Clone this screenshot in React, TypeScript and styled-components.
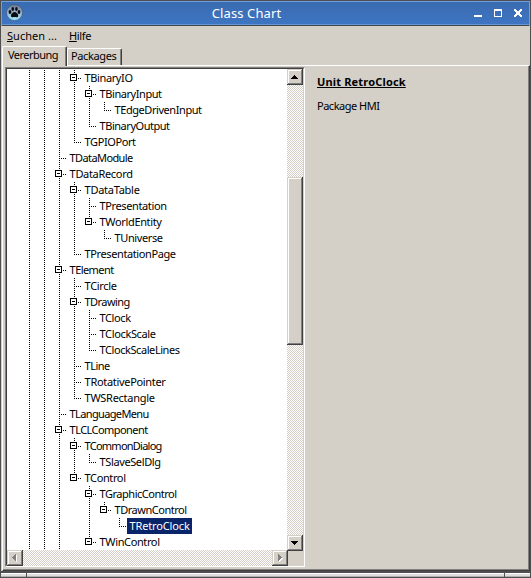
import React from 'react';
import styled, { createGlobalStyle, css } from 'styled-components';

const face = '#d4d0c8';
const uiFont = '"Noto Sans", "DejaVu Sans", sans-serif';

const GlobalStyle = createGlobalStyle`
  html, body { margin: 0; overflow: hidden; }
  * { box-sizing: border-box; }
`;

const Window = styled.div`
  width: 531px;
  height: 578px;
  display: flex;
  flex-direction: column;
  background: ${face};
  border: 1px solid #4f4f4f;
  font: 11px/16px ${uiFont};
  color: #000;
  cursor: default;
`;

const TitleBar = styled.header`
  height: 25px;
  flex: none;
  display: grid;
  grid-template-columns: 22px 1fr 60px;
  align-items: center;
  border: 1px solid #6fa0dc;
  border-bottom: 0;
  box-shadow: inset 0 -1px #3f4650, inset 0 -2px #6497d2;
  background: linear-gradient(#3a6bb0, #3e76c4);
`;

const AppIcon = styled.svg`
  display: block;
  margin: 0 0 3px 4px;
`;

const Title = styled.h1`
  margin: 0;
  font: 13px/20px "Noto Sans", sans-serif;
  color: #fff;
  text-align: center;
  padding-bottom: 3px;
  letter-spacing: 0.1px;
`;

const Controls = styled.svg`
  display: block;
`;

const MenuBar = styled.nav`
  height: 20px;
  flex: none;
  display: flex;
  gap: 13px;
  padding: 2px 0 0 6px;
`;

const MenuItem = styled.span<{ $w: number; $ls: number }>`
  display: block;
  width: ${p => p.$w}px;
  white-space: nowrap;
  letter-spacing: ${p => p.$ls}px;
  &::first-letter { text-decoration: underline; }
`;

const Tabs = styled.div`
  height: 19px;
  flex: none;
  display: flex;
  align-items: flex-end;
  padding-left: 1px;
`;

const Tab = styled.div<{ $active?: boolean; $w: number; $ls: number }>`
  width: ${p => p.$w}px;
  height: ${p => (p.$active ? 20 : 17)}px;
  margin-bottom: ${p => (p.$active ? -1 : 0)}px;
  padding: ${p => (p.$active ? '0 0 0 5px' : '0 0 0 3px')};
  line-height: ${p => (p.$active ? 16 : 14)}px;
  position: relative;
  white-space: nowrap;
  letter-spacing: ${p => p.$ls}px;
  background: ${face};
  border: 1px solid #fff;
  border-right-color: #404040;
  border-bottom: 0;
  border-top-left-radius: 2px;
  border-top-right-radius: 2px;
  box-shadow: inset -1px 0 #808080;
`;

const Page = styled.main`
  flex: 1;
  min-height: 0;
  display: flex;
  margin-left: 1px;
  border-top: 1px solid #fff;
  border-left: 1px solid #fff;
  border-right: 1px solid #404040;
  border-bottom: 1px solid #404040;
  box-shadow: inset -1px -1px #808080;
  padding: 1px 0 0 2px;
`;

const TreeFrame = styled.section`
  width: 300px;
  height: 500px;
  flex: none;
  border: 1px solid #808080;
  border-right-color: #fff;
  border-bottom-color: #fff;
`;

const TreeInner = styled.div`
  height: 498px;
  display: grid;
  grid-template-columns: 280px 16px;
  grid-template-rows: 481px 15px;
  border: 1px solid #404040;
  border-right-color: ${face};
  border-bottom-color: ${face};
`;

const Tree = styled.div`
  background: #fff;
  overflow: hidden;
  padding-top: 1px;
`;

const Row = styled.div`
  display: flex;
  height: 16px;
  padding-left: 15px;
`;

const Lines = styled.svg`
  display: block;
  flex: none;
`;

const Label = styled.span<{ $selected?: boolean; $ls: number }>`
  height: 16px;
  line-height: 16px;
  padding: 0 2px 0 2.6px;
  white-space: nowrap;
  letter-spacing: ${p => p.$ls}px;
  ${p => p.$selected && css`
    background: #0a246a;
    color: #fff;
  `}
`;

const hatch = css`
  background: conic-gradient(#fff 25%, ${face} 0 50%, #fff 0 75%, ${face} 0) 0 0 / 2px 2px;
`;

const VBar = styled.div`
  ${hatch}
  height: 482px;
  display: flex;
  flex-direction: column;
  justify-content: space-between;
  position: relative;
`;

const HBar = styled.div`
  ${hatch}
  width: 281px;
  height: 16px;
  display: flex;
  justify-content: space-between;
`;

const Raised = styled.div<{ $h?: number }>`
  width: 16px;
  height: ${p => p.$h ?? 16}px;
  background: ${face};
  box-shadow: inset -1px -1px #404040, inset 1px 1px ${face}, inset -2px -2px #808080, inset 2px 2px #fff;
`;

const Thumb = styled(Raised)`
  margin-top: 92px;
  margin-bottom: auto;
`;

const Details = styled.aside<{ $ls: number }>`
  padding: 7px 0 0 12px;
  letter-spacing: ${p => p.$ls}px;
`;

const Heading = styled.h2`
  margin: 0 0 8px;
  font: bold 11px/16px ${uiFont};
  text-decoration: underline;
  letter-spacing: 0.17px;
  white-space: nowrap;
`;

const StatusBar = styled.footer`
  height: 6px;
  flex: none;
  display: flex;
  gap: 1px;
  border-top: 2px solid #4f4f4f;
  background: #4f4f4f;
`;

const Grip = styled.div<{ $w?: number }>`
  ${p => (p.$w ? `width: ${p.$w}px;` : 'flex: 1;')}
  background: linear-gradient(#fff 1px, #dedede 1px 3px, #b0b0b0 3px);
`;

type Node = [depth: number, name: string, width: number, open?: boolean];

/* depth, class name, text width, expanded */
const nodes: Node[] = [
  [3, 'TBinaryIO', 48, true],
  [4, 'TBinaryInput', 62, true],
  [5, 'TEdgeDrivenInput', 87],
  [4, 'TBinaryOutput', 70],
  [3, 'TGPIOPort', 51],
  [2, 'TDataModule', 63],
  [2, 'TDataRecord', 63, true],
  [3, 'TDataTable', 55, true],
  [4, 'TPresentation', 67],
  [4, 'TWorldEntity', 62, true],
  [5, 'TUniverse', 48],
  [3, 'TPresentationPage', 91],
  [2, 'TElement', 44, true],
  [3, 'TCircle', 32],
  [3, 'TDrawing', 45, true],
  [4, 'TClock', 31],
  [4, 'TClockScale', 56],
  [4, 'TClockScaleLines', 80],
  [3, 'TLine', 25],
  [3, 'TRotativePointer', 81],
  [3, 'TWSRectangle', 70],
  [2, 'TLanguageMenu', 79],
  [2, 'TLCLComponent', 78, true],
  [3, 'TCommonDialog', 77, true],
  [4, 'TSlaveSelDlg', 61],
  [3, 'TControl', 41, true],
  [4, 'TGraphicControl', 77, true],
  [5, 'TDrawnControl', 72, true],
  [6, 'TRetroClock', 60],
  [4, 'TWinControl', 60, true],
];

const continues = (index: number, depth: number) => {
  if (depth < 3) return true;
  for (let i = index + 1; i < nodes.length; i++) {
    if (nodes[i][0] < depth) return false;
    if (nodes[i][0] === depth) return true;
  }
  return false;
};

const measure = (() => {
  const ctx = document.createElement('canvas').getContext('2d')!;
  return (text: string) => {
    ctx.font = `11px ${uiFont}`;
    return ctx.measureText(text).width;
  };
})();

const spacing = (text: string, width: number) => (width - measure(text)) / text.length;

function TreeRow({ index }: { index: number }) {
  const [depth, name, width, open] = nodes[index];
  const x = depth * 15 + 7;
  const dots: React.ReactNode[] = [];
  const column = (cx: number, from: number, to: number) => {
    for (let y = from; y < to; y += 2) dots.push(<rect key={`${cx}-${y}`} x={cx} y={y} width="1" height="1" />);
  };
  for (let d = 0; d < depth; d++) if (continues(index, d)) column(d * 15 + 7, 0, 16);
  column(x, 0, continues(index, depth) ? 16 : 9);
  for (let h = x + 2; h < x + 7; h += 2) dots.push(<rect key={`h${h}`} x={h} y="8" width="1" height="1" />);
  return (
    <Row>
      <Lines width={depth * 15 + 15} height="16" shapeRendering="crispEdges">
        {dots}
        {open && (
          <>
            <rect x={x - 3.5} y="4.5" width="6" height="6" fill="#fff" stroke="#000" />
            <path d={`M${x - 2} 7.5h3`} stroke="#000" />
          </>
        )}
      </Lines>
      <Label $selected={name === 'TRetroClock'} $ls={spacing(name, width)}>{name}</Label>
    </Row>
  );
}

const Arrow = ({ d, off }: { d: string; off?: boolean }) => (
  <svg width="16" height="16" shapeRendering="crispEdges" display="block">
    {off && <path d={d} fill="#fff" transform="translate(1 1)" />}
    <path d={d} fill={off ? '#808080' : '#000'} />
  </svg>
);

export default function App() {
  return (
    <Window>
      <GlobalStyle />
      <TitleBar>
        <AppIcon width="17" height="17" viewBox="0 0 17 17">
          <defs>
            <linearGradient id="orb" x2="0" y2="1">
              <stop stopColor="#66768f" />
              <stop offset=".5" stopColor="#9eb4cc" />
              <stop offset="1" stopColor="#9cecf8" />
            </linearGradient>
          </defs>
          <circle cx="8.5" cy="8.5" r="8" fill="url(#orb)" stroke="#3d587c" strokeWidth=".7" />
          <g fill="#080d14">
            <ellipse cx="4" cy="8" rx="1.4" ry="1.9" />
            <ellipse cx="6.8" cy="4.9" rx="1.3" ry="2" />
            <ellipse cx="10.4" cy="4.9" rx="1.3" ry="2" />
            <ellipse cx="13" cy="8" rx="1.4" ry="1.9" />
            <path d="M8.6 8c2 0 4 2.500 3.600 4.200-.4 1.500-2.300.8-3.600.8s-3.200.7-3.600-.8C4.600 10.500 6.600 8 8.600 8z" />
          </g>
        </AppIcon>
        <Title>Class Chart</Title>
        <Controls width="60" height="24" shapeRendering="crispEdges">
          <path d="M5 13h8v2H5z" fill="#fff" />
          <path d="M25 7h8v8h-8zM26 9v5h6V9z" fillRule="evenodd" fill="#fff" />
          <path d="M45 7h2v1h1v1h2V8h1V7h2v2h-1v1h-1v2h1v1h1v2h-2v-1h-1v-1h-2v1h-1v1h-2v-2h1v-1h1v-2h-1V9h-1z" fill="#fff" />
        </Controls>
      </TitleBar>
      <MenuBar>
        <MenuItem $w={49} $ls={spacing('Suchen ...', 50)}>Suchen ...</MenuItem>
        <MenuItem $w={22} $ls={spacing('Hilfe', 22)}>Hilfe</MenuItem>
      </MenuBar>
      <Tabs>
        <Tab $active $w={65} $ls={spacing('Vererbung', 50)}>Vererbung</Tab>
        <Tab $w={55} $ls={spacing('Packages', 45.5)}>Packages</Tab>
      </Tabs>
      <Page>
        <TreeFrame>
          <TreeInner>
            <Tree>{nodes.map((n, i) => <TreeRow key={n[1]} index={i} />)}</Tree>
            <VBar>
              <Raised><Arrow d="M7 6h1v1h1v1h1v1h1v1H4V9h1V8h1V7h1z" /></Raised>
              <Thumb $h={168} />
              <Raised><Arrow d="M4 6h7v1h-1v1H9v1H8v1H7V9H6V8H5V7H4z" /></Raised>
            </VBar>
            <HBar>
              <Raised><Arrow off d="M9 4v7H8v-1H7V9H6V8H5V7h1V6h1V5h1V4z" /></Raised>
              <Raised><Arrow off d="M6 4h1v1h1v1h1v1h1v1H9v1H8v1H7v1H6z" /></Raised>
            </HBar>
          </TreeInner>
        </TreeFrame>
        <Details $ls={spacing('Package HMI', 62.5)}>
          <Heading>Unit RetroClock</Heading>
          <div>Package HMI</div>
        </Details>
      </Page>
      <StatusBar>
        <Grip $w={25} />
        <Grip />
        <Grip $w={25} />
      </StatusBar>
    </Window>
  );
}
